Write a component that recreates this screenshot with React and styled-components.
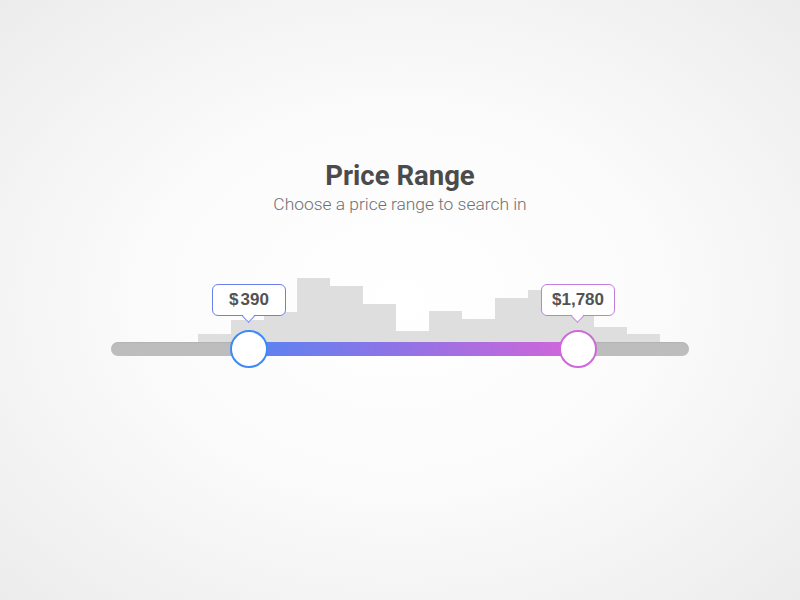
import React from 'react'
import styled, { createGlobalStyle } from 'styled-components'

const GlobalStyle = createGlobalStyle`
  html, body {
    margin: 0;
    padding: 0;
    height: 100%;
  }
  body {
    font-family: Roboto, "Liberation Sans", sans-serif;
  }
`

const TRACK_WIDTH = 578
const LOW = { value: 390, pos: 138 / 578 }
const HIGH = { value: 1780, pos: 467 / 578 }
const BINS = [15, 29, 37, 71, 63, 45, 18, 38, 30, 51, 59, 44, 22, 15]

const Page = styled.div`
  width: 800px;
  height: 600px;
  box-sizing: border-box;
  padding-top: 159px;
  display: flex;
  flex-direction: column;
  align-items: center;
  background: radial-gradient(ellipse at 50% 50%, #ffffff 0%, #fbfbfb 45%, #ececec 100%);
  overflow: hidden;
`

const Title = styled.h1`
  margin: 0;
  font-size: 27.5px;
  line-height: 34px;
  font-weight: 700;
  color: #4b4b4d;
`

const Subtitle = styled.p`
  margin: -1px 0 0;
  font-size: 17.4px;
  line-height: 24px;
  font-weight: 300;
  color: #6f6f72;
`

const SliderArea = styled.div`
  width: ${TRACK_WIDTH}px;
  margin-top: 62px;
`

const Histogram = styled.div`
  display: flex;
  align-items: flex-end;
  height: 71px;
  padding-left: 87px;
`

const Bar = styled.div`
  width: 33px;
  height: ${p => p.$h}px;
  background: #dedede;
`

const Track = styled.div`
  position: relative;
  height: 14px;
  margin-top: -7px;
  border-radius: 7px;
  background: #bdbdbd;
  box-shadow: inset 0 1px 1px rgba(0, 0, 0, 0.06);
`

const Fill = styled.div`
  position: absolute;
  top: 0;
  bottom: 0;
  background: linear-gradient(90deg, #5a83f1 0%, #8f73e6 45%, #d265d9 100%);
`

const Handle = styled.div`
  position: absolute;
  top: 50%;
  width: 0;
  height: 0;
`

const Knob = styled.div`
  position: absolute;
  left: -19px;
  top: -19px;
  width: 34px;
  height: 34px;
  border-radius: 50%;
  background: #ffffff;
  border: 2px solid ${p => p.$color};
`

const Bubble = styled.div`
  position: absolute;
  left: 0;
  bottom: 33px;
  transform: translateX(-50%);
  height: 30px;
  width: 72px;
  display: flex;
  align-items: center;
  justify-content: center;
  border: 1.6px solid ${p => p.$color};
  border-radius: 6px;
  background: #ffffff;
  font-family: "Liberation Sans", Arial, sans-serif;
  font-size: 17px;
  font-weight: 700;
  color: #525254;
  white-space: nowrap;

  &::after {
    content: '';
    position: absolute;
    left: 50%;
    bottom: -6px;
    width: 8px;
    height: 8px;
    margin-left: -5px;
    background: #ffffff;
    border-right: 1.6px solid ${p => p.$color};
    border-bottom: 1.6px solid ${p => p.$color};
    transform: rotate(45deg);
  }
`

const Dollar = styled.span`
  margin-right: 2px;
`

const format = v => v.toLocaleString('en-US')

const App = () => {
  const lowX = LOW.pos * TRACK_WIDTH
  const highX = HIGH.pos * TRACK_WIDTH

  return (
    <Page>
      <GlobalStyle />
      <Title>Price Range</Title>
      <Subtitle>Choose a price range to search in</Subtitle>
      <SliderArea>
        <Histogram>
          {BINS.map((h, i) => <Bar key={i} $h={h} />)}
        </Histogram>
        <Track>
          <Fill style={{ left: lowX, width: highX - lowX }} />
          <Handle style={{ left: lowX }}>
            <Bubble $color="#6b80ef"><Dollar>$</Dollar>{format(LOW.value)}</Bubble>
            <Knob $color="#3c8af5" />
          </Handle>
          <Handle style={{ left: highX }}>
            <Bubble $color="#c27ddf">${format(HIGH.value)}</Bubble>
            <Knob $color="#cd6ad9" />
          </Handle>
        </Track>
      </SliderArea>
    </Page>
  )
}

export default App
